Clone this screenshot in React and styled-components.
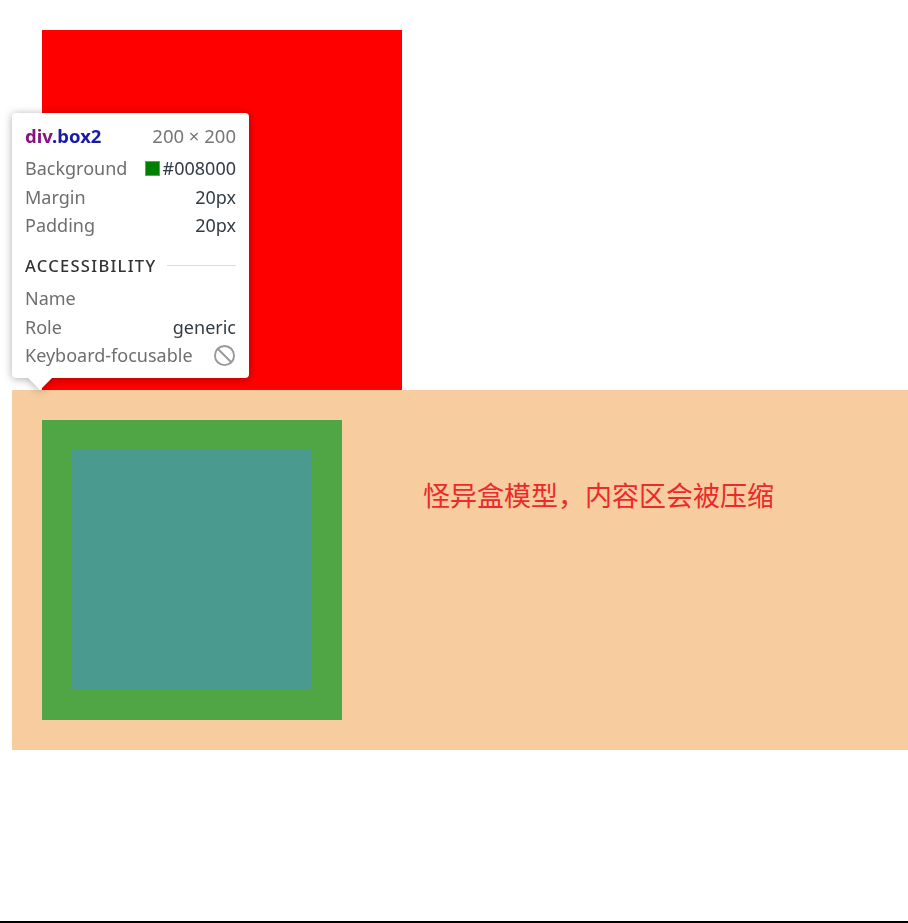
import React from 'react';
import styled, { createGlobalStyle } from 'styled-components';
import { Ban } from 'lucide-react';

const GlobalStyle = createGlobalStyle`
  html, body {
    margin: 0;
    padding: 0;
    background: #fff;
  }
  body {
    font-family: "Noto Sans", "Noto Sans CJK SC", sans-serif;
  }
`;

const Page = styled.div`
  position: relative;
  box-sizing: border-box;
  min-height: 100vh;
  padding: 30px 0 0 12px;
  border-bottom: 2px solid #000;
`;

const RedBox = styled.div`
  width: 360px;
  height: 360px;
  margin-left: 30px;
  background: #ff0000;
`;

/* margin highlight of box2 */
const MarginZone = styled.div`
  display: flex;
  align-items: flex-start;
  height: 360px;
  box-sizing: border-box;
  padding: 30px;
  background: #f7cc9e;
`;

const PaddingBox = styled.div`
  flex: none;
  width: 300px;
  height: 300px;
  box-sizing: border-box;
  padding: 30px;
  background: #50a645;
`;

const ContentBox = styled.div`
  width: 100%;
  height: 100%;
  background: #4a9a90;
`;

const Caption = styled.p`
  margin: 55px 0 0 81px;
  font-family: "Noto Sans CJK SC", sans-serif;
  font-size: 27px;
  line-height: 40px;
  color: #ea2a2c;
`;

const Tooltip = styled.div`
  position: absolute;
  left: 12px;
  top: 113px;
  width: 237px;
  box-sizing: border-box;
  padding: 8px 13px 8px 13px;
  background: #fff;
  border-radius: 4px;
  filter: drop-shadow(0 1px 4px rgba(0, 0, 0, 0.32));
  font-family: "Noto Sans", sans-serif;
  font-size: 18px;

  &::after {
    content: '';
    position: absolute;
    left: 16px;
    bottom: -12px;
    border-left: 12px solid transparent;
    border-right: 12px solid transparent;
    border-top: 12px solid #fff;
  }
`;

const TitleRow = styled.div`
  display: flex;
  justify-content: space-between;
  align-items: center;
  height: 28px;
  margin-bottom: 5px;
`;

const Tag = styled.span`
  font-weight: 700;
  font-size: 18.5px;
  color: #881280;
  span {
    color: #1a1aa6;
  }
`;

const Size = styled.span`
  font-size: 18.5px;
  color: #777;
`;

const Row = styled.div`
  display: flex;
  justify-content: space-between;
  align-items: center;
  height: 28.5px;
`;

const Label = styled.span`
  color: #6e6e6e;
`;

const Value = styled.span`
  display: flex;
  align-items: center;
  color: #333b44;
`;

const Swatch = styled.span`
  display: inline-block;
  width: 13px;
  height: 13px;
  margin-right: 3px;
  background: ${(p) => p.color};
  border: 1px solid #888;
`;

const Section = styled.div`
  display: flex;
  align-items: center;
  gap: 11px;
  height: 28px;
  margin: 11.5px 0 5px;
  font-size: 16.5px;
  font-weight: 500;
  letter-spacing: 1.3px;
  color: #333;

  &::after {
    content: '';
    flex: 1;
    height: 1px;
    background: #dcdcdc;
  }
`;

export default function App() {
  return (
    <Page>
      <GlobalStyle />
      <RedBox />
      <MarginZone>
        <PaddingBox>
          <ContentBox />
        </PaddingBox>
        <Caption>怪异盒模型，内容区会被压缩</Caption>
      </MarginZone>

      <Tooltip>
        <TitleRow>
          <Tag>div<span>.box2</span></Tag>
          <Size>200 × 200</Size>
        </TitleRow>
        <Row>
          <Label>Background</Label>
          <Value><Swatch color="#008000" />#008000</Value>
        </Row>
        <Row>
          <Label>Margin</Label>
          <Value>20px</Value>
        </Row>
        <Row>
          <Label>Padding</Label>
          <Value>20px</Value>
        </Row>
        <Section>ACCESSIBILITY</Section>
        <Row>
          <Label>Name</Label>
        </Row>
        <Row>
          <Label>Role</Label>
          <Value>generic</Value>
        </Row>
        <Row>
          <Label>Keyboard-focusable</Label>
          <Value><Ban size={23} color="#9a9a9a" strokeWidth={2} /></Value>
        </Row>
      </Tooltip>
    </Page>
  );
}
